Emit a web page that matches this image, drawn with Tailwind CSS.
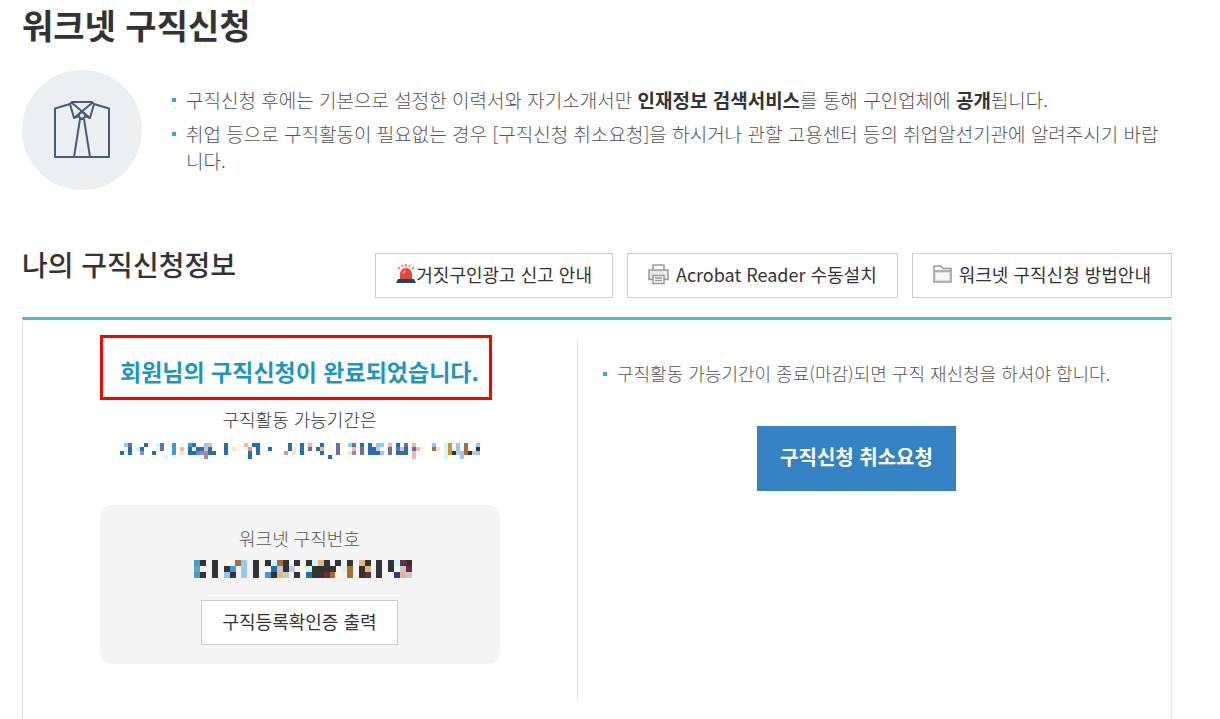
<!DOCTYPE html>
<html lang="ko">
  <head>
    <meta charset="UTF-8" />
    <meta name="viewport" content="width=device-width, initial-scale=1" />
    <title>워크넷 구직신청</title>
    <script src="https://cdn.jsdelivr.net/npm/@tailwindcss/browser@4"></script>
  </head>
  <body class="bg-white text-[#333] font-['Noto_Sans_CJK_KR',sans-serif]">
    <main class="flex min-h-screen flex-col pl-[22px] pr-12">
      <h1 class="pt-[3px] text-[34px] leading-[44px] font-bold">워크넷 구직신청</h1>

      <section class="mt-[23px] flex gap-[30px]">
        <div class="flex size-[120px] shrink-0 items-center justify-center rounded-full bg-[#ebeff2]">
          <svg class="size-[60px]" viewBox="0 0 60 60" fill="none" stroke="#4a5a7a" stroke-width="2" stroke-linejoin="round" aria-hidden="true">
            <path d="M18 4 3 8.500V57h54V8.500L42 4" />
            <path d="M18 4 20 2h20l2 2M18 4l4 14 5-2M42 4l-4 14-5-2" />
            <path d="M20 3 38 18M40 3 22 18" />
            <circle cx="30" cy="15.500" r="3" fill="#ebeff2" />
            <path d="M28 19 22 57M32 19l6 38M28 19h4" />
          </svg>
        </div>
        <ul class="flex-1 space-y-[7px] pt-4 pr-2 text-[19px] leading-[27px] font-light text-[#555] break-all">
          <li class="flex gap-[10px]">
            <span class="mt-3 size-1 shrink-0 bg-[#2fa9d5]"></span>
            <span>구직신청 후에는 기본으로 설정한 이력서와 자기소개서만 <strong class="font-bold text-[#333]">인재정보 검색서비스</strong>를 통해 구인업체에 <strong class="font-bold text-[#333]">공개</strong>됩니다.</span>
          </li>
          <li class="flex gap-[10px]">
            <span class="mt-3 size-1 shrink-0 bg-[#2fa9d5]"></span>
            <span>취업 등으로 구직활동이 필요없는 경우 [구직신청 취소요청]을 하시거나 관할 고용센터 등의 취업알선기관에 알려주시기 바랍니다.</span>
          </li>
        </ul>
      </section>

      <header class="mt-[63px] flex items-start justify-between">
        <h2 class="text-[28px] leading-[22px] font-medium">나의 구직신청정보</h2>
        <div class="flex gap-[14px] text-lg">
          <button type="button" class="flex h-[45px] items-center border border-[#ccc] bg-white px-5 pb-[3px]">
            <svg class="size-5" viewBox="0 0 20 20" aria-hidden="true">
              <path d="M4 15V10a6 6 0 0 1 12 0v5z" fill="#e8483a" />
              <path d="M7 9.500Q7.500 7.500 9.500 7" stroke="#f9b0a6" stroke-width="1.500" fill="none" />
              <path d="M2 15h16l2 4H0z" fill="#1d4560" />
              <path d="M10 0v3M6 1l1 2M14 1l-1 2M2 3l2 2M18 3l-2 2" stroke="#ee6b60" stroke-width="1.500" />
            </svg>
            거짓구인광고 신고 안내
          </button>
          <button type="button" class="flex h-[45px] items-center border border-[#ccc] bg-white px-5 pb-[3px]">
            <svg class="mr-[7px] size-[21px]" viewBox="0 0 21 21" fill="#e8e8e8" stroke="#999" stroke-width="1.500" aria-hidden="true">
              <path d="M5 6V1h11v5" fill="#fff" />
              <path d="M1 6h19v9.500H1z" />
              <path d="M5 11.500h11v8H5z" fill="#fff" />
              <path d="M7 14h7M7 16.500h7" />
              <path d="M16 8.500h2" stroke="#fff" />
            </svg>
            Acrobat Reader 수동설치
          </button>
          <button type="button" class="flex h-[45px] items-center border border-[#ccc] bg-white px-5 pb-[3px]">
            <svg class="mr-[7px] h-[18px] w-[19px]" viewBox="0 0 19 18" fill="#f6f6f6" stroke="#999" stroke-width="1.500" aria-hidden="true">
              <path d="M1 17V1h7l2 2.500h8V17z" />
              <path d="M1 6h17" />
              <path d="M2.500 7.500h14v8h-14z" stroke="#ddd" stroke-width="1" />
            </svg>
            워크넷 구직신청 방법안내
          </button>
        </div>
      </header>

      <section class="mt-[19px] grid flex-1 grid-cols-[555fr_593fr] border-x border-t-3 border-x-[#e5e5e5] border-t-[#56b4d6] pt-[19px] pb-[18px]">
        <div class="-mt-1 flex flex-col items-center pr-[2px]">
          <h3 class="mr-2 flex h-[65px] w-[392px] items-center justify-center border-3 border-[#f00] pt-2 pl-2 text-[23px] font-bold text-[#1b96c3]">회원님의 구직신청이 완료되었습니다.</h3>
          <p class="mt-[6px] text-lg leading-[27px] font-light">구직활동 가능기간은</p>
          <svg id="period" class="mt-[10px] h-4 w-[360px]" role="img" aria-label="구직활동 가능기간"></svg>

          <div class="mt-[46px] flex w-[400px] flex-col items-center rounded-xl bg-[#f4f4f4] pt-5 pb-[19px]">
            <p class="text-lg leading-[27px] font-light text-[#555]">워크넷 구직번호</p>
            <svg id="number" class="mt-2 mr-[-6px] h-[18px] w-[218px]" role="img" aria-label="워크넷 구직번호"></svg>
            <div class="mt-[17px] ml-[6px] w-[194px] border-t border-white"></div>
            <button type="button" class="mt-1 h-[45px] border border-[#ccc] bg-white px-5 pb-[3px] text-lg">구직등록확인증 출력</button>
          </div>
        </div>

        <div class="-ml-px flex flex-col items-center border-l border-[#e5e5e5]">
          <ul class="w-full pt-[21px] pl-[25px] text-lg leading-[27px] font-light text-[#555]">
            <li class="flex gap-[10px]">
              <span class="mt-3 size-1 shrink-0 bg-[#2fa9d5]"></span>
              <span>구직활동 가능기간이 종료(마감)되면 구직 재신청을 하셔야 합니다.</span>
            </li>
          </ul>
          <button type="button" class="mt-[39px] mr-9 h-[65px] bg-[#3583c4] px-[23px] pb-[3px] text-xl font-bold text-white">구직신청 취소요청</button>
        </div>
      </section>
    </main>

    <script>
      const colors = {
        A: '#cdf8fb', B: '#246fb0', C: '#3b9bdc', D: '#333333', E: '#68a0b0',
        G: '#d09530', H: '#ad6b33', K: '#f0b8b4', L: '#90caf8', M: '#a782ac',
        N: '#303a86', O: '#ffe0c8', P: '#6570a8', R: '#6a2f33', S: '#c3c9d2',
        T: '#e6b880', U: '#cc9bab', Y: '#fdfbdc'
      };

      // Each row is a list of "start:cells", start counted in steps of `unit` pixels
      function drawMosaic(id, rows, unit, width, height) {
        document.getElementById(id).innerHTML = rows
          .map((row, y) =>
            row
              .split(' ')
              .map((run) => {
                const [start, cells] = run.split(':');
                return [...cells]
                  .map(
                    (c, i) =>
                      `<rect x="${start * unit + i * width}" y="${y * height}" width="${width}" height="${height}" fill="${colors[c]}"/>`
                  )
                  .join('');
              })
              .join('')
          )
          .join('');
      }

      drawMosaic(
        'period',
        [
          '1:LP 6:B 9:AP 13:C 15:Y 17:CB 21:LKY 26:B 29:Y 31:K 33:BB 42:BY 45:B 47:K 50:BY 54:P 57:LP 60:B 62:B 64:LL 67:K 69:B 71:P 73:K 75:Y 78:L 81:AG 84:L 86:H 89:L',
          '2:B 4:AB 10:P 13:C 15:K 17:BOB 20:BKB 26:B 28:OY 31:YU 34:B 37:B 42:BO 45:B 47:P 49:BK 54:P 58:K 60:P 62:BBK 67:P 69:PKB 73:PKY 78:HO 81:AG 84:L 86:H 89:D',
          '0:B 2:B 5:M 8:B 13:C 15:O 17:BBCMMBB 26:B 32:BYB 41:U 43:O 45:B 50:B 54:P 57:OM 60:P 62:BBBL 67:P 69:BBB 73:K 75:Y 81:AGDSLHDSL',
          '11:A 21:M 32:B 52:B 73:K 81:A 85:L'
        ],
        4, 4, 4
      );
      drawMosaic(
        'number',
        [
          '0:CD 18:D 30:Y 41:HL 59:D 71:DAHD 100:D 112:DATD 141:D 153:D 165:TD 182:D 194:D 200:ARD',
          '0:E 18:D 30:DC 47:L 59:D 77:BSDS 106:YADDDD 147:A 153:H 165:DT 182:D 194:D 206:S 212:R',
          '0:CD 18:D 30:LD 47:L 59:D 71:CDTS 100:D 112:BDDRH 141:Y 153:H 165:DR 182:D 200:NTS'
        ],
        1, 6, 6
      );
    </script>
  </body>
</html>
